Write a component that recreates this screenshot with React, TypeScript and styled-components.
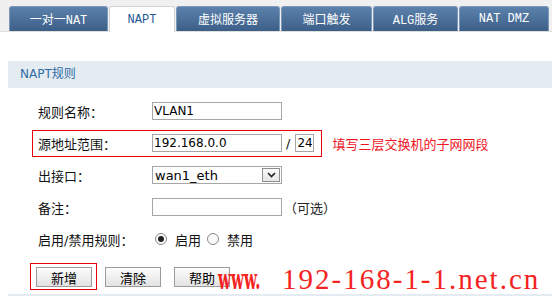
import React from "react";
import styled, { createGlobalStyle } from "styled-components";

const GlobalStyle = createGlobalStyle`
  html, body {
    margin: 0;
    padding: 0;
    background: #fff;
  }
  body {
    font-family: "DejaVu Sans", "Noto Sans CJK SC", sans-serif;
    font-size: 13px;
    color: #111;
  }
`;

const Page = styled.div`
  position: relative;
  width: 552px;
  height: 296px;
  overflow: hidden;
`;

const TabBar = styled.div`
  display: flex;
  align-items: flex-end;
  gap: 1px;
  box-sizing: border-box;
  height: 32px;
  padding: 6px 0 0 9px;
  background: #f0f0f0;
  border-bottom: 1px solid #dedede;
`;

const Tab = styled.div<{ $w: number; $active?: boolean }>`
  display: flex;
  align-items: center;
  justify-content: center;
  box-sizing: border-box;
  width: ${(p) => p.$w}px;
  height: ${(p) => (p.$active ? 26 : 25)}px;
  margin-bottom: ${(p) => (p.$active ? -1 : 0)}px;
  border: 1px solid ${(p) => (p.$active ? "#d4d4d4" : "#7c98b9")};
  border-bottom: none;
  border-radius: 3px 3px 0 0;
  background: ${(p) =>
    p.$active ? "#fff" : "linear-gradient(#5b81ac, #3c5f88)"};
  color: ${(p) => (p.$active ? "#1d5793" : "#fff")};
  font-family: "Liberation Mono", "Noto Sans CJK SC", monospace;
  font-size: 12px;
  white-space: pre;
`;

const SectionHead = styled.div`
  margin: 29px 0 0 8px;
  height: 27px;
  line-height: 27px;
  padding-left: 12px;
  background: #e4ecf2;
  color: #2f6ba4;
  font-size: 12px;
`;

const Form = styled.div`
  padding: 7px 0 0 32px;
`;

const Row = styled.div`
  display: flex;
  align-items: center;
  height: 32px;
`;

const Field = styled.div<{ $mark?: boolean }>`
  display: flex;
  align-items: center;
  box-sizing: border-box;
  height: 27px;
  padding: 0 7px 0 5px;
  border: 1px solid ${(p) => (p.$mark ? "#e8000b" : "transparent")};
`;

const Label = styled.span`
  width: 114px;
  font-size: 13px;
`;

const TextBox = styled.input<{ $w: number }>`
  box-sizing: border-box;
  width: ${(p) => p.$w}px;
  height: 18px;
  margin: 0;
  padding: 0 1px;
  border: 1px solid #a6a6a6;
  outline: none;
  font-family: "DejaVu Sans", sans-serif;
  font-size: 12px;
  color: #000;
  background: #fff;
`;

const Slash = styled.span`
  margin: 0 5px 0 4px;
  font-size: 13px;
`;

const Note = styled.span<{ $hint?: boolean }>`
  margin-left: ${(p) => (p.$hint ? 10 : -6)}px;
  color: ${(p) => (p.$hint ? "#f0141e" : "#222")};
  font-family: "Noto Sans CJK SC", sans-serif;
  font-size: 13px;
`;

const Select = styled.div`
  display: flex;
  align-items: center;
  box-sizing: border-box;
  width: 130px;
  height: 18px;
  padding: 0 1px 0 2px;
  border: 1px solid #a6a6a6;
  font-size: 13px;
  color: #000;
`;

const SelectText = styled.span`
  flex: 1;
`;

const Arrow = styled.span`
  display: flex;
  align-items: center;
  justify-content: center;
  box-sizing: border-box;
  width: 18px;
  height: 14px;
  border: 1px solid #8d8d8d;
  background: linear-gradient(#fbfbfb, #e6e6e6);
`;

const Radios = styled.div`
  display: flex;
  align-items: center;
  margin-left: 3px;
`;

const Radio = styled.span<{ $on?: boolean }>`
  position: relative;
  box-sizing: border-box;
  width: 12px;
  height: 12px;
  margin-right: 8px;
  border: 1px solid #8a8a8a;
  border-radius: 50%;
  background: #fafafa;
  &::after {
    content: "";
    display: ${(p) => (p.$on ? "block" : "none")};
    position: absolute;
    left: 2px;
    top: 2px;
    width: 6px;
    height: 6px;
    border-radius: 50%;
    background: #222;
  }
`;

const RadioText = styled.span`
  margin-right: 6px;
  font-size: 13px;
`;

const ButtonRow = styled.div`
  display: flex;
  align-items: center;
  margin: 8px 0 0 30px;
`;

const Mark = styled.div`
  padding: 3px 4px 2px 5px;
  border: 1px solid #e8000b;
`;

const Button = styled.button<{ $gap?: number }>`
  box-sizing: border-box;
  width: 56px;
  height: 20px;
  margin: 0 0 0 ${(p) => p.$gap ?? 0}px;
  padding: 0;
  border: 1px solid #9b9b9b;
  border-radius: 0;
  background: linear-gradient(#fdfdfd, #e2e2e2);
  font-family: "Noto Sans CJK SC", sans-serif;
  font-size: 13px;
  color: #000;
`;

const BottomStrip = styled.div`
  margin: 4px 0 0 8px;
  height: 4px;
  background: #e4ecf2;
`;

const Watermark = styled.div`
  position: absolute;
  left: 218px;
  top: 265px;
  display: flex;
  align-items: baseline;
  color: #f52222;
  white-space: nowrap;
  line-height: 1;
`;

const Www = styled.span`
  display: inline-block;
  width: 52px;
  font-family: "DejaVu Serif Condensed", "Liberation Serif", serif;
  font-size: 27px;
  font-weight: bold;
  transform: scaleX(0.62);
  transform-origin: left center;
`;

const Domain = styled.span`
  margin-left: 12px;
  font-family: "Liberation Serif", serif;
  font-size: 29px;
  letter-spacing: 2px;
`;

const tabs = [
  { label: "一对一NAT", w: 99 },
  { label: "NAPT", w: 66, active: true },
  { label: "虚拟服务器", w: 104 },
  { label: "端口触发", w: 91 },
  { label: "ALG服务", w: 85 },
  { label: "NAT DMZ", w: 90 },
];

export default function App() {
  return (
    <Page>
      <GlobalStyle />
      <TabBar>
        {tabs.map((t) => (
          <Tab key={t.label} $w={t.w} $active={t.active}>
            {t.label}
          </Tab>
        ))}
      </TabBar>

      <SectionHead>NAPT规则</SectionHead>

      <Form>
        <Row>
          <Field>
            <Label>规则名称：</Label>
            <TextBox $w={130} defaultValue="VLAN1" readOnly />
          </Field>
        </Row>
        <Row>
          <Field $mark>
            <Label>源地址范围：</Label>
            <TextBox $w={130} defaultValue="192.168.0.0" readOnly />
            <Slash>/</Slash>
            <TextBox $w={19} defaultValue="24" readOnly />
          </Field>
          <Note $hint>填写三层交换机的子网网段</Note>
        </Row>
        <Row>
          <Field>
            <Label>出接口：</Label>
            <Select>
              <SelectText>wan1_eth</SelectText>
              <Arrow>
                <svg width="9" height="6" viewBox="0 0 9 6">
                  <path d="M1 1 L4.5 4.5 L8 1" fill="none" stroke="#222" strokeWidth="1.6" />
                </svg>
              </Arrow>
            </Select>
          </Field>
        </Row>
        <Row>
          <Field>
            <Label>备注：</Label>
            <TextBox $w={130} defaultValue="" readOnly />
          </Field>
          <Note>（可选）</Note>
        </Row>
        <Row>
          <Field>
            <Label>启用/禁用规则：</Label>
            <Radios>
              <Radio $on />
              <RadioText>启用</RadioText>
              <Radio />
              <RadioText>禁用</RadioText>
            </Radios>
          </Field>
        </Row>
      </Form>

      <ButtonRow>
        <Mark>
          <Button>新增</Button>
        </Mark>
        <Button $gap={8}>清除</Button>
        <Button $gap={13}>帮助</Button>
      </ButtonRow>

      <BottomStrip />

      <Watermark>
        <Www>www.</Www>
        <Domain>192-168-1-1.net.cn</Domain>
      </Watermark>
    </Page>
  );
}
